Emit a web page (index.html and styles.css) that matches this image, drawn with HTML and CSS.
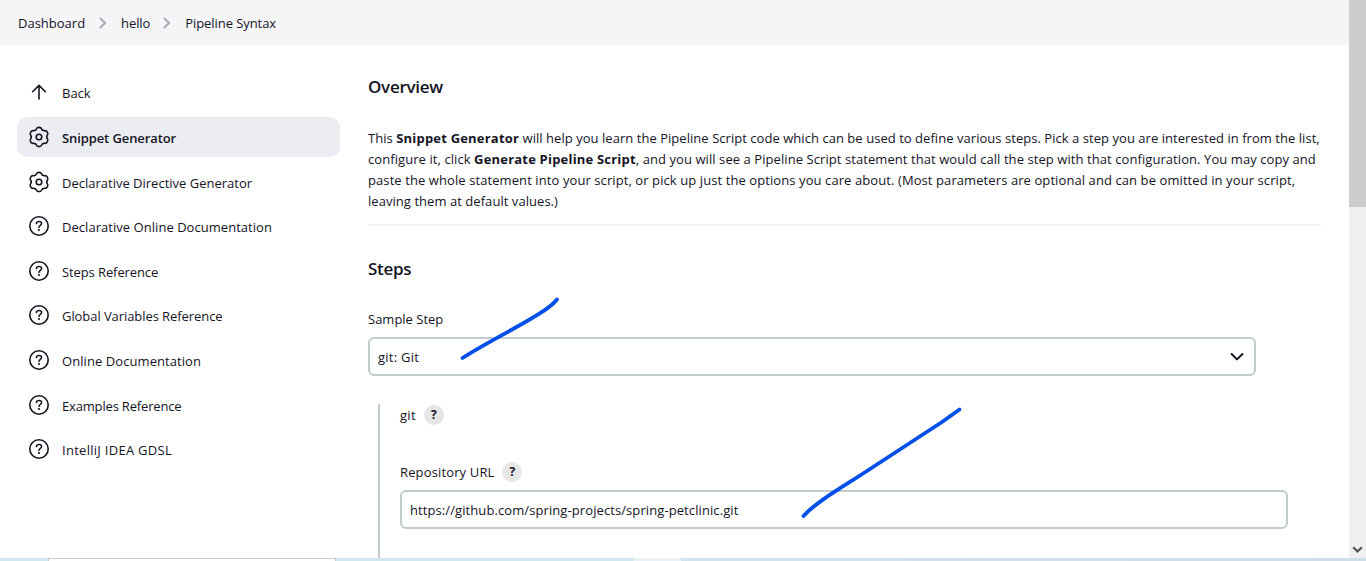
FILE: index.html
```html
<!DOCTYPE html>
<html lang="en">
<head>
<meta charset="utf-8">
<title>Pipeline Syntax</title>
<link rel="stylesheet" href="styles.css">
</head>
<body>
<svg class="defs" aria-hidden="true">
  <symbol id="gear" viewBox="1 1 22 22">
    <g fill="none" stroke="currentColor" stroke-width="1.6" stroke-linecap="round">
      <path id="lobe" d="M8.1 5.25C9 5 9.2 4.6 9.4 3.9C9.75 2.75 10.6 2.4 12 2.4C13.4 2.4 14.25 2.75 14.6 3.9C14.8 4.6 15 5 15.9 5.25"/>
      <use href="#lobe" transform="rotate(60 12 12)"/>
      <use href="#lobe" transform="rotate(120 12 12)"/>
      <use href="#lobe" transform="rotate(180 12 12)"/>
      <use href="#lobe" transform="rotate(240 12 12)"/>
      <use href="#lobe" transform="rotate(300 12 12)"/>
      <circle cx="12" cy="12" r="2.8"/>
    </g>
  </symbol>
  <symbol id="help" viewBox="0 0 22 22">
    <circle cx="11" cy="11" r="9.2" fill="none" stroke="currentColor" stroke-width="1.6"/>
    <path d="M8.4 8.6C8.5 7.2 9.6 6.5 11 6.5C12.5 6.5 13.6 7.3 13.6 8.6C13.6 10.4 11 10.5 11 12.5" fill="none" stroke="currentColor" stroke-width="1.5" stroke-linecap="round" stroke-linejoin="round"/>
    <circle cx="11" cy="15" r="1.05" fill="currentColor"/>
  </symbol>
  <symbol id="sep" viewBox="0 0 8 12">
    <path d="M1.3 1.5L6.2 6L1.3 10.5" fill="none" stroke="currentColor" stroke-width="1.7" stroke-linecap="round" stroke-linejoin="round"/>
  </symbol>
</svg>
<div class="window">
  <div class="page">
    <header class="crumbs">
      <span class="c1">Dashboard</span><svg class="sep"><use href="#sep"/></svg><span class="c2">hello</span><svg class="sep second"><use href="#sep"/></svg><span class="c3">Pipeline Syntax</span>
    </header>
    <div class="body">
      <nav class="side">
        <a class="item"><svg class="ico" viewBox="0 0 22 22"><path d="M4.6 9.7L11 3.4L17.4 9.7M11 3.7V17" fill="none" stroke="currentColor" stroke-width="1.6" stroke-linecap="round" stroke-linejoin="round"/></svg><span class="s1">Back</span></a>
        <a class="item active"><svg class="ico"><use href="#gear"/></svg><span class="s2">Snippet Generator</span></a>
        <a class="item"><svg class="ico"><use href="#gear"/></svg><span class="s3">Declarative Directive Generator</span></a>
        <a class="item"><svg class="ico"><use href="#help"/></svg><span class="s4">Declarative Online Documentation</span></a>
        <a class="item"><svg class="ico"><use href="#help"/></svg><span class="s5">Steps Reference</span></a>
        <a class="item"><svg class="ico"><use href="#help"/></svg><span class="s6">Global Variables Reference</span></a>
        <a class="item"><svg class="ico"><use href="#help"/></svg><span class="s7">Online Documentation</span></a>
        <a class="item"><svg class="ico"><use href="#help"/></svg><span class="s8">Examples Reference</span></a>
        <a class="item"><svg class="ico"><use href="#help"/></svg><span class="s9">IntelliJ IDEA GDSL</span></a>
      </nav>
      <main class="main">
        <h2 class="title t1">Overview</h2>
        <p class="intro"><span class="line l1">This <b>Snippet Generator</b> will help you learn the Pipeline Script code which can be used to define various steps. Pick a step you are interested in from the list,</span>
        <span class="line l2">configure it, click <b>Generate Pipeline Script</b>, and you will see a Pipeline Script statement that would call the step with that configuration. You may copy and</span>
        <span class="line l3">paste the whole statement into your script, or pick up just the options you care about. (Most parameters are optional and can be omitted in your script,</span>
        <span class="line l4">leaving them at default values.)</span></p>
        <h2 class="title t2">Steps</h2>
        <div class="label"><span class="f1">Sample Step</span></div>
        <div class="field"><span class="f2">git: Git</span><svg class="chev" viewBox="0 0 14 10"><path d="M1.6 2L7 7.4L12.4 2" fill="none" stroke="currentColor" stroke-width="2" stroke-linecap="round" stroke-linejoin="round"/></svg></div>
        <section class="nested">
          <div class="label"><span class="f3">git</span><i class="q">?</i></div>
          <div class="label repo"><span class="f4">Repository URL</span><i class="q">?</i></div>
          <div class="field"><span class="f5">https://github.com/spring-projects/spring-petclinic.git</span></div>
        </section>
      </main>
    </div>
  </div>
  <div class="scroll"><div class="thumb"></div><svg class="down" viewBox="0 0 11 8"><path d="M1.2 1.2L5.5 5.5L9.8 1.2" fill="none" stroke="currentColor" stroke-width="2.2"/></svg></div>
</div>
<footer class="taskbar"><div class="search"></div><div class="task"></div><div class="rest"></div></footer>
<svg class="ink" viewBox="0 0 1366 561"><path d="M462.5 358C490 340 533 320 549 307C553 304 555 302 557 299.5M803.5 516C817 501 846 485 870 469L942 422L959.5 409.5" fill="none" stroke="#004fe8" stroke-width="3.8" stroke-linecap="round" stroke-linejoin="round"/></svg>
</body>
</html>
```
FILE: styles.css
```css
* { box-sizing: border-box; }
body { margin: 0; height: 561px; overflow: hidden; background: #fff; color: #14141f; font: 13px/21px "Open Sans", "Noto Sans", sans-serif; display: flex; flex-direction: column; }
.defs { display: none; }
.window { display: flex; height: 558px; }
.page { flex: 1; overflow: hidden; }
.crumbs { height: 45px; background: #f5f5f8; display: flex; align-items: center; padding: 0 18px; white-space: nowrap; }
.crumbs span { padding-top: 2px; }
.sep { width: 8px; height: 12px; color: #a5a5b8; margin: 0 14px; flex: none; }
.sep.second { margin-left: 13px; }
.c2 { letter-spacing: -.1px; }
.c3 { letter-spacing: -.07px; }
.body { display: flex; }
.side { width: 323px; margin-left: 17px; padding-top: 27.5px; display: flex; flex-direction: column; gap: 4.6px; }
.item { height: 40px; display: flex; align-items: center; border-radius: 10px; padding-left: 11px; white-space: nowrap; }
.item span { padding-top: 2.7px; }
.active { background: #ecedf3; font-weight: 600; }
.ico { width: 22px; height: 22px; margin-right: 12px; flex: none; }
.s2 { letter-spacing: -.1px; }
.s4 { letter-spacing: .04px; }
.s5 { letter-spacing: -.1px; }
.s6 { letter-spacing: -.07px; }
.s7 { letter-spacing: .07px; }
.s8 { letter-spacing: -.17px; }
.s9 { letter-spacing: .28px; }
.main { width: 953px; margin-left: 28px; padding-top: 30px; white-space: nowrap; }
.title { margin: 0; font-size: 17px; line-height: 24px; font-weight: 600; letter-spacing: -.27px; }
.intro { margin: 29px 0 0; height: 98px; border-bottom: 2px solid #f3f3f8; }
.line { display: block; }
.line b { letter-spacing: .2px; }
.l1 { letter-spacing: .043px; }
.l2 { letter-spacing: .073px; }
.l3 { letter-spacing: .087px; }
.l4 { letter-spacing: .05px; }
.t2 { margin-top: 31px; }
.label { display: flex; align-items: center; height: 20px; margin-top: 28px; }
.field { width: 888px; height: 39px; border: 2px solid #c1cacf; border-radius: 6px; margin-top: 8px; padding: 0 10px 0 8px; display: flex; align-items: center; justify-content: space-between; }
.field span { padding-top: 2px; }
.f2 { letter-spacing: .25px; }
.f3 { letter-spacing: .3px; }
.f4 { letter-spacing: .14px; }
.f5 { letter-spacing: .09px; }
.chev { width: 14px; height: 10px; }
.nested { margin: 28px 0 0 10px; height: 155px; border-left: 2px solid #c1cacf; padding-left: 20px; }
.nested .label { margin-top: 0; height: 22px; }
.nested .repo { margin-top: 35px; }
.nested .field { margin-top: 7px; }
.q { width: 20px; height: 20px; border-radius: 50%; background: #e6e6e6; font: 700 12px/20px "Open Sans", sans-serif; text-align: center; margin-left: 8px; }
.scroll { width: 17px; background: #f0f0f0; display: flex; flex-direction: column; justify-content: space-between; align-items: center; padding-bottom: 4px; }
.thumb { width: 17px; height: 207px; background: #cdcdcd; }
.down { width: 11px; height: 8px; color: #505050; }
.taskbar { height: 3px; background: #d0e6ee; display: flex; }
.search { width: 288px; height: 3px; margin-left: 48px; background: #fff; border: 1px solid #c8c8c8; border-bottom: 0; }
.task { width: 48px; margin-left: 297px; background: #eaf2f8; }
.rest { flex: 1; background: linear-gradient(90deg, #d0e4ee, #d0dcea); }
.ink { position: absolute; left: 0; top: 0; width: 1366px; height: 561px; }
```
